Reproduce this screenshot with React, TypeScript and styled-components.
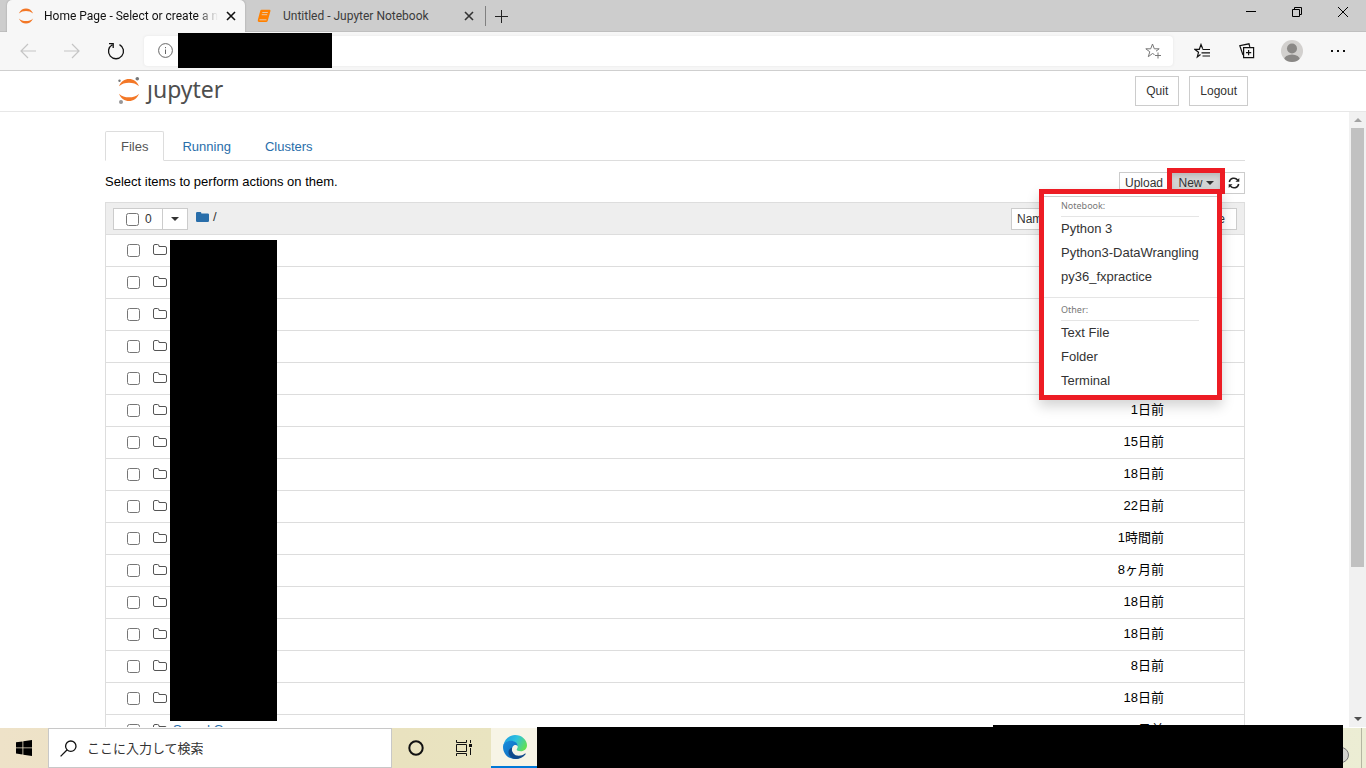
import React from 'react';
import styled, { createGlobalStyle, css } from 'styled-components';

const ui = `"Noto Sans", "Noto Sans CJK JP", sans-serif`;
const page = `"Liberation Sans", "Noto Sans CJK JP", sans-serif`;

const GlobalStyle = createGlobalStyle`
  * { box-sizing: border-box; }
  body { margin: 0; background: #fff; overflow: hidden; }
  button { font: inherit; color: inherit; padding: 0; border: 0; background: none; }
  svg { display: block; flex: none; }
`;

const Screen = styled.div`
  display: flex;
  flex-direction: column;
  height: 100vh;
  font-family: ${page};
  font-size: 13px;
  line-height: 20px;
  color: #000;
`;

/* browser chrome */

const TabStrip = styled.div`
  display: flex;
  height: 32px;
  flex: none;
  padding-left: 7px;
  background: #cdcdcd;
  box-shadow: inset 0 -1px #bfbfbf;
  font-family: ${ui};
  font-size: 12px;
`;

const BrowserTab = styled.div<{ $active?: boolean }>`
  display: flex;
  align-items: center;
  width: 238px;
  height: 32px;
  padding: 0 8px 0 11px;
  color: ${(p) => (p.$active ? '#111' : '#3b3b3b')};
  ${(p) =>
    p.$active &&
    css`
      background: #f7f7f7;
      border-radius: 5px 5px 0 0;
      box-shadow: 0 0 2px #999;
      clip-path: inset(0 -3px 0 -3px);
    `}
`;

const TabTitle = styled.span<{ $fade?: boolean }>`
  flex: 1;
  min-width: 0;
  margin-left: 10px;
  margin-right: 6px;
  font-family: Roboto, sans-serif;
  font-size: 12px;
  overflow: hidden;
  white-space: nowrap;
  ${(p) => p.$fade && css`mask-image: linear-gradient(to right, #000 88%, transparent);`}
`;

const IconButton = styled.button<{ $w?: number; $h?: number }>`
  display: flex;
  align-items: center;
  justify-content: center;
  width: ${(p) => p.$w ?? 16}px;
  height: ${(p) => p.$h ?? 16}px;
  flex: none;
`;

const NewTab = styled.div`
  display: flex;
  align-items: center;
  height: 20px;
  margin-top: 6px;
  padding-left: 7px;
  margin-left: 2px;
  border-left: 1px solid #808080;
`;

const WindowControls = styled.div`
  display: flex;
  margin-left: auto;
`;

const Toolbar = styled.div`
  display: flex;
  align-items: center;
  flex: none;
  height: 39px;
  padding: 0 4px 1px 6px;
  background: #f7f7f7;
  border-bottom: 1px solid #cfcfcf;
`;

const Address = styled.div`
  display: flex;
  align-items: center;
  flex: 1;
  height: 30px;
  margin-left: 6px;
  margin-right: 6px;
  padding: 0 12px 0 14px;
  background: #fff;
  border-radius: 4px;
  box-shadow: 0 0 3px #e4e4e4;
`;

const UrlCover = styled.div`
  width: 154px;
  height: 35px;
  margin-left: 5px;
  background: #000;
`;

const UrlInput = styled.input`
  flex: 1;
  min-width: 0;
  border: 0;
  outline: 0;
  background: transparent;
`;

/* notebook page */

const SiteHeader = styled.header`
  display: flex;
  align-items: center;
  flex: none;
  height: 41px;
  padding: 0 118px 0 117px;
  border-bottom: 1px solid #e7e7e7;
`;

const Brand = styled.a`
  display: flex;
  align-items: center;
  gap: 6px;
  margin-right: auto;
  padding-bottom: 2px;
  color: #4e4e4e;
  text-decoration: none;
`;

const Wordmark = styled.span`
  padding-bottom: 2px;
  font: 23px/26px "Noto Sans", sans-serif;
`;

const HeaderButton = styled.button`
  height: 30px;
  margin-left: 10px;
  && { padding: 0 10px; border: 1px solid #ccc; color: #333; font-size: 12px; background: #fff; }
`;

const Viewport = styled.div`
  display: flex;
  flex: 1;
  min-height: 0;
`;

const Content = styled.main`
  flex: 1;
  min-width: 0;
  overflow: hidden;
  padding: 19px 104px 0 105px;
`;

const Tabs = styled.nav`
  display: flex;
  height: 30px;
  border-bottom: 1px solid #ddd;
`;

const TabLink = styled.a<{ $active?: boolean }>`
  height: 30px;
  margin-right: 2px;
  padding: 5px 15px;
  border: 1px solid transparent;
  border-radius: 2px 2px 0 0;
  color: #296eaa;
  text-decoration: none;
  ${(p) => p.$active && css`color: #555; border-color: #ddd #ddd #fff; background: #fff;`}
`;

const ActionRow = styled.div`
  display: flex;
  gap: 1px;
  padding: 11px 0 8px;
`;

const Hint = styled.span`
  flex: 1;
`;

const SmallButton = styled.button<{ $w?: number; $on?: boolean }>`
  display: flex;
  align-items: center;
  justify-content: center;
  gap: 3px;
  height: 22px;
  flex: none;
  width: ${(p) => (p.$w ? `${p.$w}px` : 'auto')};
  && {
    padding: 0 5px;
    border: 1px solid #ccc;
    color: #333;
    font-size: 12px;
    background: ${(p) => (p.$on ? '#d4d4d4' : '#fff')};
    ${(p) => p.$on && css`box-shadow: inset 0 3px 5px rgba(0, 0, 0, 0.125); border-color: #8c8c8c;`}
  }
`;

const Caret = styled.span`
  border: 4px solid transparent;
  border-top-color: currentColor;
  border-bottom: 0;
`;

const MenuAnchor = styled.div`
  position: relative;
`;

const Highlight = styled.div`
  position: absolute;
  top: -4px;
  left: -3px;
  width: 58px;
  height: 26px;
  border: 5px solid #ed1c24;
  z-index: 2;
`;

const Menu = styled.div`
  position: absolute;
  z-index: 3;
  top: 17px;
  right: 0;
  width: 183px;
  padding: 2px 0;
  border: 5px solid #ed1c24;
  background: #fff;
  box-shadow: 0 6px 12px rgba(0, 0, 0, 0.175);
`;

const MenuGroup = styled.div<{ $later?: boolean }>`
  border-top: 1px solid ${(p) => (p.$later ? '#e5e5e5' : '#ccc')};
  padding: 0 18px 0 17px;
  ${(p) => p.$later && css`margin-top: 8px; padding-top: 3px;`}
`;

const MenuHeading = styled.div`
  height: 20px;
  line-height: 18px;
  border-bottom: 1px solid #e5e5e5;
  color: #777;
  font-family: ${ui};
  font-size: 9px;
`;

const MenuItem = styled.a`
  display: block;
  line-height: 24px;
  color: #333;
  text-decoration: none;
  white-space: nowrap;
`;

const Listing = styled.div`
  position: relative;
`;

const FileTable = styled.table`
  width: 100%;
  table-layout: fixed;
  border: 1px solid #ddd;
  border-bottom: 0;
  border-collapse: separate;
  border-spacing: 0;
`;

const HeadCell = styled.th`
  height: 32px;
  padding: 5px 7px 4px;
  border-bottom: 1px solid #ddd;
  background: #eee;
  font-weight: normal;
`;

const HeadTools = styled.div`
  display: flex;
`;

const SelectAll = styled.label`
  display: flex;
  align-items: center;
  width: 49px;
  height: 22px;
  padding-left: 12px;
  gap: 6px;
  border: 1px solid #ccc;
  border-right: 0;
  background: #fff;
  color: #333;
  font-size: 12px;
`;

const Check = styled.input`
  display: block;
  width: 13px;
  height: 13px;
  margin: 0;
`;

const Crumb = styled.a`
  display: flex;
  align-items: center;
  gap: 4px;
  height: 18px;
  margin-left: 8px;
  color: #333;
  text-decoration: none;
`;

const SortTools = styled.div`
  display: flex;
  justify-content: space-between;
  width: 226px;
  margin-left: auto;
`;

const Cell = styled.td<{ $right?: boolean; $text?: boolean }>`
  height: 32px;
  padding: 0 0 ${(p) => (p.$text ? 2 : 0)}px;
  border-bottom: 1px solid #ddd;
  text-align: ${(p) => (p.$right ? 'right' : 'left')};
  line-height: 20px;
`;

const CheckWrap = styled.div`
  padding-left: 21px;
`;

const FileLink = styled.a`
  display: flex;
  align-items: center;
  gap: 6px;
  color: #296eaa;
  text-decoration: none;
`;

const NamesCover = styled.div`
  position: absolute;
  top: 38px;
  left: 65px;
  width: 107px;
  height: 481px;
  background: #000;
`;

const ScrollBar = styled.div`
  display: flex;
  flex-direction: column;
  width: 17px;
  flex: none;
  padding: 0 2px;
  background: #f1f1f1;
`;

const Thumb = styled.div`
  flex: 439;
  background: #c1c1c1;
`;

const ThumbRest = styled.div`
  flex: 143;
`;

/* desktop task bar */

const TaskBar = styled.footer`
  position: relative;
  display: flex;
  flex: none;
  height: 40px;
  margin-top: 1px;
  background: linear-gradient(to right, #eee2c8, #e9e2bf 400px, #e9e4c0 490px, #ecedd4);
`;

const TaskSearch = styled.label`
  display: flex;
  align-items: center;
  gap: 10px;
  width: 344px;
  padding-left: 11px;
  border: 1px solid #c8c8c8;
  background: #fff;
`;

const SearchInput = styled.input`
  flex: 1;
  min-width: 0;
  padding: 0;
  border: 0;
  outline: 0;
  background: transparent;
  font: 13px/20px "Noto Sans CJK JP", sans-serif;
  &::placeholder { color: #333; opacity: 1; }
`;

const RunningApp = styled(IconButton)`
  && { margin-left: 3px; background: #f7f4e6; border-bottom: 2px solid #0078d7; }
`;

const TrayCover = styled.div`
  flex: 1;
  margin: -1px 0 0 -2px;
  background: #000;
  z-index: 1;
`;

const TrayCoverTop = styled.div`
  position: absolute;
  right: 23px;
  top: -3px;
  width: 350px;
  height: 3px;
  background: #000;
`;

const TrayEnd = styled.div`
  display: flex;
  align-items: center;
  width: 23px;
  padding-top: 14px;
  overflow: hidden;
`;

const TrayDot = styled.div`
  width: 16px;
  height: 16px;
  margin-left: -10px;
  flex: none;
  border: 1px solid #777;
  border-radius: 50%;
  background: #d2d2cc;
`;

const DesktopEdge = styled.div`
  width: 5px;
  height: 40px;
  margin: -14px 0 0 auto;
  border-left: 1px solid #b5b6a2;
`;

const CloseGlyph = ({ color = '#111' }: { color?: string }) => (
  <svg width="10" height="10" viewBox="0 0 10 10" stroke={color} strokeWidth="1.6">
    <path d="M1 1l8 8M9 1L1 9" />
  </svg>
);

const JupyterMark = () => (
  <svg width="24" height="28" viewBox="0 0 24 28">
    <path d="M2 10.300C4 5.300 7.700 3 12 3s8 2.300 10 7.300C19.300 7.700 16 6.700 12 6.700S4.700 7.700 2 10.300Z" fill="#f37726" />
    <path d="M2 17.700C4 22.700 7.700 25 12 25s8-2.300 10-7.300C19.300 20.300 16 21.300 12 21.300S4.700 20.300 2 17.700Z" fill="#f37726" />
    <circle cx="20.300" cy="2.700" r="1.800" fill="#767677" />
    <circle cx="2.500" cy="4.800" r="1.200" fill="#767677" />
    <circle cx="4" cy="26" r="2" fill="#989798" />
  </svg>
);

const JupyterFavicon = () => (
  <svg width="16" height="16" viewBox="0 0 16 16">
    <path d="M.8 5.500C2.500 1.800 5.200.5 8 .5s5.500 1.300 7.200 5C13 3.600 10.800 2.900 8 2.900S3 3.600.8 5.500Z" fill="#f37726" />
    <path d="M.8 10.500C2.500 14.200 5.200 15.500 8 15.500s5.500-1.300 7.200-5C13 12.400 10.800 13.100 8 13.100S3 12.400.8 10.500Z" fill="#f37726" />
  </svg>
);

const FolderOutline = () => (
  <svg width="14" height="12" viewBox="0 0 14 12" fill="none" stroke="#555" strokeWidth="1">
    <path d="M.5 2Q.5 .5 2 .5h2.500Q6 .5 6 2v.5h6q1.500 0 1.500 1.500v5q0 1.500-1.500 1.500H2Q.5 10.500 .5 9Z" />
  </svg>
);

const Arrow = ({ left }: { left?: boolean }) => (
  <svg width="16" height="16" viewBox="0 0 16 16" fill="none" stroke="#c5c5c5" strokeWidth="1.200">
    <path d={left ? 'M16 8H1M8 1L1 8l7 7' : 'M0 8h15M8 1l7 7-7 7'} />
  </svg>
);

const ScrollArrow = ({ up }: { up?: boolean }) => (
  <svg width="8" height="4" viewBox="0 0 8 4" fill={up ? '#a3a3a3' : '#505050'}>
    <path d={up ? 'M0 4l4-4 4 4z' : 'M0 0h8L4 4z'} />
  </svg>
);

const dates = [
  '', '', '', '', '', '1日前', '15日前', '18日前', '22日前', '1時間前',
  '8ヶ月前', '18日前', '18日前', '8日前', '18日前', '18日前',
];

export default function App() {
  return (
    <Screen>
      <GlobalStyle />
      <TabStrip>
        <BrowserTab $active>
          <JupyterFavicon />
          <TabTitle $fade>Home Page - Select or create a notebook</TabTitle>
          <IconButton $w={13} aria-label="Close tab"><CloseGlyph /></IconButton>
        </BrowserTab>
        <BrowserTab>
          <svg width="17" height="14" viewBox="0 0 17 14">
            <path d="M5.500.8h8q1.300 0 .9 1.400L11.800 11.500q-.4 1.500-1.800 1.500H3.200Q1.300 13 1.800 11L4.200 2Q4.500.8 5.500.8Z" fill="#ff8000" />
            <path d="M6.300 3.500h5.500M5.700 5.700h5.500M3.500 10.800h7" stroke="#e6d0b8" strokeWidth=".9" />
          </svg>
          <TabTitle>Untitled - Jupyter Notebook</TabTitle>
          <IconButton $w={13} aria-label="Close tab"><CloseGlyph color="#333" /></IconButton>
        </BrowserTab>
        <NewTab>
          <IconButton aria-label="New tab">
            <svg width="13" height="13" viewBox="0 0 13 13" stroke="#222"><path d="M6.500 0v13M0 6.500h13" /></svg>
          </IconButton>
        </NewTab>
        <WindowControls>
          <IconButton $w={46} $h={23} aria-label="Minimize">
            <svg width="10" height="10" viewBox="0 0 10 10" stroke="#000"><path d="M0 4.500h10" /></svg>
          </IconButton>
          <IconButton $w={46} $h={23} aria-label="Restore">
            <svg width="10" height="10" viewBox="0 0 10 10" fill="none" stroke="#000"><path d="M.5 2.500h7v7h-7zM2.500 2V.5h7v7H8" /></svg>
          </IconButton>
          <IconButton $w={46} $h={23} aria-label="Close">
            <svg width="10" height="10" viewBox="0 0 10 10" stroke="#000"><path d="M0 0l10 10M10 0L0 10" /></svg>
          </IconButton>
        </WindowControls>
      </TabStrip>

      <Toolbar>
        <IconButton $w={44} $h={30} aria-label="Back"><Arrow left /></IconButton>
        <IconButton $w={44} $h={30} aria-label="Forward"><Arrow /></IconButton>
        <IconButton $w={44} $h={30} aria-label="Refresh">
          <svg width="18" height="18" viewBox="0 0 18 18" fill="none" stroke="#111" strokeWidth="1.300">
            <path d="M12.500 2.600A7.500 7.500 0 1 1 5.300 2.700M2 1.700h4.200v4.200" />
          </svg>
        </IconButton>
        <Address>
          <svg width="15" height="15" viewBox="0 0 15 15" fill="none" stroke="#666">
            <circle cx="7.500" cy="7.500" r="6.900" />
            <path d="M7.500 6.500V11M7.500 4v1.200" />
          </svg>
          <UrlCover />
          <UrlInput aria-label="Address" />
          <svg width="16" height="16" viewBox="0 0 16 16" fill="none" stroke="#777">
            <path d="M9.500 11.600 7.500 10.500l-4.200 3.200L4.800 8.800.8 5.800h4.900L7.500 1l1.800 4.800h4.900L11 8.200M13 9.500v6M10 12.500h6" />
          </svg>
        </Address>
        <IconButton $w={45} $h={30} aria-label="Favorites">
          <svg width="16" height="16" viewBox="0 0 16 16" fill="none" stroke="#111" strokeWidth="1.200">
            <path d="M6.500 11.500 3.300 14 4.500 9.300.8 6.300h4.500L7 1.500l1.700 4.300M8.500 6.500H16M7.500 9.800H16M8.500 13H16" />
          </svg>
        </IconButton>
        <IconButton $w={45} $h={30} aria-label="Collections">
          <svg width="16" height="16" viewBox="0 0 16 16" fill="none" stroke="#111" strokeWidth="1.200">
            <path d="M4.600 4.600h10v10h-10zM9.600 7v5.200M7 9.600h5.200M4 12 .8 2.700 10 .8l.8 3" />
          </svg>
        </IconButton>
        <IconButton $w={45} $h={30} aria-label="Profile">
          <svg width="22" height="22" viewBox="0 0 22 22">
            <clipPath id="face"><circle cx="11" cy="11" r="11" /></clipPath>
            <g clipPath="url(#face)">
              <path d="M0 0h22v22H0z" fill="#d2d0ce" />
              <circle cx="11" cy="8.500" r="5" fill="#8a8886" />
              <ellipse cx="11" cy="20" rx="8" ry="5.500" fill="#8a8886" />
            </g>
          </svg>
        </IconButton>
        <IconButton $w={48} $h={30} aria-label="Settings and more">
          <svg width="16" height="4" viewBox="0 0 16 4" fill="#111">
            <path d="M1 1h2v2H1zM7 1h2v2H7zM13 1h2v2h-2z" />
          </svg>
        </IconButton>
      </Toolbar>

      <SiteHeader>
        <Brand href="#" aria-label="jupyter">
          <JupyterMark />
          <Wordmark>ȷupyter</Wordmark>
        </Brand>
        <HeaderButton>Quit</HeaderButton>
        <HeaderButton>Logout</HeaderButton>
      </SiteHeader>

      <Viewport>
        <Content>
          <Tabs>
            <TabLink href="#" $active>Files</TabLink>
            <TabLink href="#">Running</TabLink>
            <TabLink href="#">Clusters</TabLink>
          </Tabs>
          <ActionRow>
            <Hint>Select items to perform actions on them.</Hint>
            <SmallButton $w={50}>Upload</SmallButton>
            <MenuAnchor>
              <SmallButton $w={52} $on aria-expanded="true">New <Caret /></SmallButton>
              <Highlight />
              <Menu>
                <MenuGroup>
                  <MenuHeading>Notebook:</MenuHeading>
                  <MenuItem href="#">Python 3</MenuItem>
                  <MenuItem href="#">Python3-DataWrangling</MenuItem>
                  <MenuItem href="#">py36_fxpractice</MenuItem>
                </MenuGroup>
                <MenuGroup $later>
                  <MenuHeading>Other:</MenuHeading>
                  <MenuItem href="#">Text File</MenuItem>
                  <MenuItem href="#">Folder</MenuItem>
                  <MenuItem href="#">Terminal</MenuItem>
                </MenuGroup>
              </Menu>
            </MenuAnchor>
            <SmallButton $w={22} aria-label="Refresh list">
              <svg width="12" height="12" viewBox="0 0 12 12" fill="none" stroke="#222" strokeWidth="1.500">
                <path d="M1.300 5A4.700 4.700 0 0 1 9.600 3M10.700 7A4.700 4.700 0 0 1 2.400 9" />
                <path d="M11.300 1v3.800H7.500zM.7 11V7.200h3.800z" fill="#222" stroke="none" />
              </svg>
            </SmallButton>
          </ActionRow>
          <Listing>
            <FileTable>
              <colgroup>
                <col width="47" />
                <col />
                <col width="120" />
                <col width="80" />
              </colgroup>
              <thead>
                <tr>
                  <HeadCell colSpan={4}>
                    <HeadTools>
                      <SelectAll><Check type="checkbox" />0</SelectAll>
                      <SmallButton $w={26} aria-label="Select by kind"><Caret /></SmallButton>
                      <Crumb href="#">
                        <svg width="13" height="10" viewBox="0 0 13 10" fill="#296eaa">
                          <path d="M0 1.200Q0 0 1.200 0h3q1.200 0 1.200 1.400h6.300Q13 1.400 13 2.600v6.200Q13 10 11.800 10H1.200Q0 10 0 8.800Z" />
                        </svg>
                        /
                      </Crumb>
                      <SortTools>
                        <SmallButton>Name</SmallButton>
                        <SmallButton>Last Modified</SmallButton>
                        <SmallButton $w={68}>File size</SmallButton>
                      </SortTools>
                    </HeadTools>
                  </HeadCell>
                </tr>
              </thead>
              <tbody>
                {dates.map((date, i) => (
                  <tr key={i}>
                    <Cell><CheckWrap><Check type="checkbox" aria-label={`Select item ${i + 1}`} /></CheckWrap></Cell>
                    <Cell $text>
                      <FileLink href="#">
                        <FolderOutline />
                        {i === dates.length - 1 && 'Saved Games'}
                      </FileLink>
                    </Cell>
                    <Cell $text $right>{date}</Cell>
                    <Cell />
                  </tr>
                ))}
              </tbody>
            </FileTable>
            <NamesCover />
          </Listing>
        </Content>
        <ScrollBar>
          <IconButton $w={13} $h={16} aria-label="Scroll up"><ScrollArrow up /></IconButton>
          <Thumb />
          <ThumbRest />
          <IconButton $w={13} $h={17} aria-label="Scroll down"><ScrollArrow /></IconButton>
        </ScrollBar>
      </Viewport>

      <TaskBar>
        <IconButton $w={48} $h={40} aria-label="Start">
          <svg width="16" height="16" viewBox="0 0 16 16" fill="#000">
            <path d="M0 2.300 6.500 1.400v6.100H0zM7.300 1.300 16 0v7.500H7.300zM0 8.300h6.500v6.200L0 13.600zM7.300 8.300H16V16l-8.700-1.300z" />
          </svg>
        </IconButton>
        <TaskSearch>
          <svg width="17" height="17" viewBox="0 0 17 17" fill="none" stroke="#111" strokeWidth="1.300">
            <circle cx="10.800" cy="6.200" r="5.200" />
            <path d="M7.200 9.800.6 16.400" />
          </svg>
          <SearchInput placeholder="ここに入力して検索" aria-label="検索" />
        </TaskSearch>
        <IconButton $w={48} $h={40} aria-label="Cortana">
          <svg width="16" height="16" viewBox="0 0 16 16" fill="none" stroke="#111" strokeWidth="2">
            <circle cx="8" cy="8" r="6.700" />
          </svg>
        </IconButton>
        <IconButton $w={48} $h={40} aria-label="Task view">
          <svg width="16" height="16" viewBox="0 0 16 16" fill="none" stroke="#111">
            <path d="M.5 4.500h10v7H.5zM.5 0v2.500h10V0M.5 16v-2.500h10V16M14.500 0v3M14.500 8v7" />
            <path d="M13 4h3v3h-3z" fill="#111" stroke="none" />
          </svg>
        </IconButton>
        <RunningApp $w={48} $h={40} aria-label="Edge">
          <svg width="24" height="24" viewBox="0 0 24 24">
            <defs>
              <linearGradient id="edgeTop" x1="0" x2="1" y1=".2" y2=".6">
                <stop offset="0" stopColor="#1c9de0" />
                <stop offset=".5" stopColor="#2fc2df" />
                <stop offset="1" stopColor="#62e052" />
              </linearGradient>
              <linearGradient id="edgeLow" x1="0" x2="1" y1="0" y2="1">
                <stop offset="0" stopColor="#1a8ddc" />
                <stop offset="1" stopColor="#0b63b8" />
              </linearGradient>
            </defs>
            <path d="M.3 10.500C1.500 4 6.500 0 12 0c7 0 12 5 12 10.200 0 3.800-3 6-6.300 6-2.500 0-4-.8-4-1.700 0-.6 1-1.200 1-3C14.700 8.500 11.500 6.200 7.800 6.200 4.500 6.200 1.800 7.800.3 10.500Z" fill="url(#edgeTop)" />
            <path d="M0 12c0-3.500 3.500-6.200 7.800-6.200 4 0 6.900 2.300 6.900 5.400-1-1.200-2.300-1.500-3.500-.9C8.500 11.800 8 16 10.500 19c2 2.400 4.500 3.300 7 3.200C15.800 23.400 14 24 12 24 5 24 0 18.500 0 12Z" fill="url(#edgeLow)" />
            <path d="M9.200 12.500c-1.500 4.500 2 8.300 6.500 8.300 2.500 0 4.500-.8 6.300-2.200.5-.3 1 .1.600.7C20.500 22.300 16.500 24 13 24c-4.500 0-7.500-3.500-7.500-7 0-2 1.500-3.800 3.700-4.500Z" fill="#114a8b" />
          </svg>
        </RunningApp>
        <TrayCover />
        <TrayCoverTop />
        <TrayEnd>
          <TrayDot />
          <DesktopEdge />
        </TrayEnd>
      </TaskBar>
    </Screen>
  );
}
